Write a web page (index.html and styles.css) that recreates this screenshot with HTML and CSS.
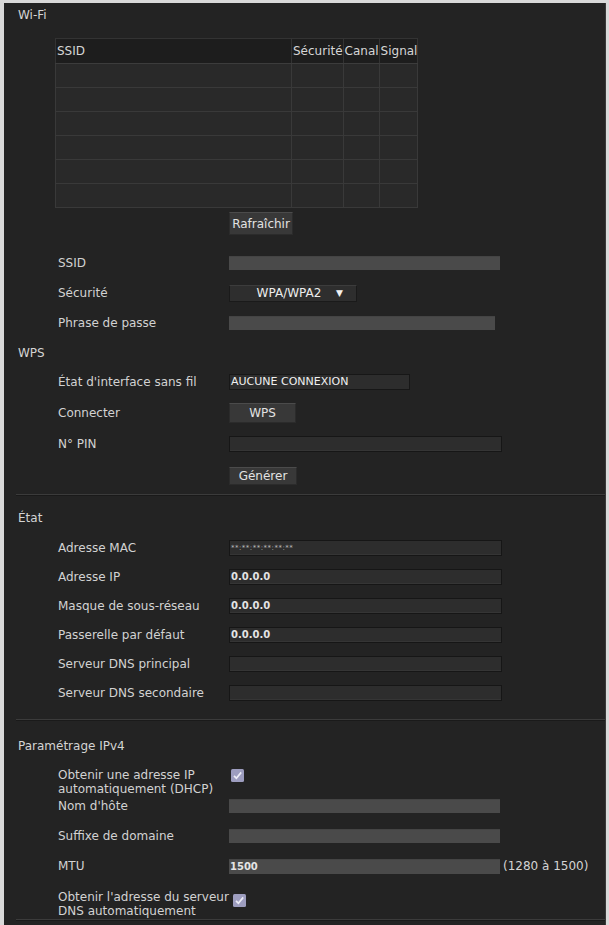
FILE: index.html
```html
<!DOCTYPE html>
<html lang="fr">
<head>
<meta charset="utf-8">
<title>Wi-Fi</title>
<link rel="stylesheet" href="styles.css">
</head>
<body>
<div class="panel">
  <section class="section sec-wifi">
    <h2 class="title">Wi-Fi</h2>
    <table class="ap-table">
      <thead>
        <tr><th class="c-ssid">SSID</th><th class="c-sec">Sécurité</th><th class="c-can">Canal</th><th class="c-sig">Signal</th></tr>
      </thead>
      <tbody>
        <tr><td></td><td></td><td></td><td></td></tr>
        <tr><td></td><td></td><td></td><td></td></tr>
        <tr><td></td><td></td><td></td><td></td></tr>
        <tr><td></td><td></td><td></td><td></td></tr>
        <tr><td></td><td></td><td></td><td></td></tr>
        <tr><td></td><td></td><td></td><td></td></tr>
      </tbody>
    </table>
    <div class="btn btn-refresh">Rafraîchir</div>

    <div class="rows rows-wifi">
      <div class="row"><span class="label">SSID</span><span class="inp-light w271"></span></div>
      <div class="row"><span class="label">Sécurité</span>
        <span class="select"><span class="select-val">WPA/WPA2</span><span class="select-arrow">▼</span></span>
      </div>
      <div class="row"><span class="label">Phrase de passe</span><span class="inp-light w266"></span></div>
    </div>

    <h2 class="title t-wps">WPS</h2>
    <div class="rows rows-wps">
      <div class="row"><span class="label">État d'interface sans fil</span><span class="status">AUCUNE CONNEXION</span></div>
      <div class="row"><span class="label">Connecter</span><span class="btn btn-wps">WPS</span></div>
      <div class="row"><span class="label">N° PIN</span><span class="inp-dark"></span></div>
      <div class="row"><span class="label"></span><span class="btn btn-gen">Générer</span></div>
    </div>
  </section>
  <div class="sep sep-1"></div>

  <section class="section sec-etat">
    <h2 class="title">État</h2>
    <div class="rows rows-etat">
      <div class="row"><span class="label">Adresse MAC</span><span class="inp-dark"><span class="val val-mac">**:**:**:**:**:**</span></span></div>
      <div class="row"><span class="label">Adresse IP</span><span class="inp-dark"><span class="val">0.0.0.0</span></span></div>
      <div class="row"><span class="label">Masque de sous-réseau</span><span class="inp-dark"><span class="val">0.0.0.0</span></span></div>
      <div class="row"><span class="label">Passerelle par défaut</span><span class="inp-dark"><span class="val">0.0.0.0</span></span></div>
      <div class="row"><span class="label">Serveur DNS principal</span><span class="inp-dark"></span></div>
      <div class="row"><span class="label">Serveur DNS secondaire</span><span class="inp-dark"></span></div>
    </div>
  </section>
  <div class="sep sep-2"></div>

  <section class="section sec-ipv4">
    <h2 class="title">Paramétrage IPv4</h2>
    <div class="rows rows-ipv4">
      <div class="row row-two row-dhcp"><span class="label">Obtenir une adresse IP<br>automatiquement (DHCP)</span>
        <svg class="cbox cb-dhcp" width="13" height="13" viewBox="0 0 13 13"><rect x="0" y="0" width="13" height="13" rx="1.5" fill="#9d9dbf"/><path d="M3 6.8 L5.4 9.2 L10.2 3.4" fill="none" stroke="#ececf6" stroke-width="1.7"/></svg>
      </div>
      <div class="row row-s row-nom"><span class="label">Nom d'hôte</span><span class="inp-light w271"></span></div>
      <div class="row row-s"><span class="label">Suffixe de domaine</span><span class="inp-light w271"></span></div>
      <div class="row row-s"><span class="label">MTU</span><span class="inp-light w271 inp-mtu"><span class="val">1500</span></span><span class="hint">(1280 à 1500)</span></div>
      <div class="row row-two row-dns"><span class="label">Obtenir l'adresse du serveur<br>DNS automatiquement</span>
        <svg class="cbox cb-dns" width="13" height="13" viewBox="0 0 13 13"><rect x="0" y="0" width="13" height="13" rx="1.5" fill="#9d9dbf"/><path d="M3 6.8 L5.4 9.2 L10.2 3.4" fill="none" stroke="#ececf6" stroke-width="1.7"/></svg>
      </div>
    </div>
  </section>
  <div class="sep sep-3"></div>
</div>
</body>
</html>
```

FILE: styles.css
```css
html, body {
  margin: 0;
  padding: 0;
}
body {
  background: #d9d9d9;
  font-family: "DejaVu Sans", Verdana, sans-serif;
  font-size: 12px;
  color: #d0d0d0;
}
.panel {
  margin: 3px 3px 0 4px;
  height: 922px;
  background: #232323;
  overflow: hidden;
  border-right: 1px solid #3a3a3a;
}
.section {
  padding-left: 14px;
}
.sec-wifi { padding-top: 5px; }
.title {
  margin: 0;
  height: 14px;
  line-height: 14px;
  font-size: 12px;
  font-weight: normal;
  color: #d4d4d4;
}
.t-wps { margin-top: 8px; }

/* table */
.ap-table {
  margin: 16px 0 0 37px;
  border-collapse: collapse;
  border: 1px solid #3c3c3c;
  table-layout: fixed;
}
.ap-table th {
  height: 24px;
  padding: 0 0 0 1px;
  background: #1d1d1d;
  font-weight: normal;
  text-align: left;
  color: #d6d6d6;
  font-size: 12px;
  white-space: nowrap;
  overflow: visible;
  border: 1px solid #333;
  border-bottom: 1px solid #3c3c3c;
}
.ap-table td {
  height: 23px;
  padding: 0;
  background: #292929;
  border: 1px solid #393939;
}
.c-ssid { width: 234px; }
.c-sec { width: 49px; }
.c-can { width: 34px; }
.c-sig { width: 36px; }

/* buttons */
.btn {
  display: flex;
  align-items: center;
  justify-content: center;
  box-sizing: border-box;
  background: #383838;
  border: 1px solid #2b2b2b;
  border-top-color: #4b4b4b;
  color: #e2e2e2;
  font-size: 12px;
}
.btn-refresh {
  margin: 4px 0 0 211px;
  width: 64px;
  height: 23px;
}
.btn-wps { width: 67px; height: 20px; }
.btn-gen { width: 68px; height: 18px; margin-top: 3px; }

/* rows */
.rows { margin-left: 40px; }
.rows-wifi { margin-top: 13px; }
.rows-wps { margin-top: 6px; }
.rows-etat { margin-top: 8px; }
.rows-ipv4 { margin-top: 15px; }
.row {
  display: flex;
  align-items: center;
  height: 30px;
}
.rows-wps .row { height: 31px; }
.rows-etat .row { height: 29px; }
.label {
  flex: 0 0 171px;
  width: 171px;
  white-space: nowrap;
  color: #d2d2d2;
}
.row-two {
  align-items: flex-start;
  height: 28px;
  line-height: 14px;
}
.row-s { height: 20px; margin-top: 10px; }
.row-nom { margin-top: 0; }
.row-dns { margin-top: 14px; }
.cbox { display: block; flex: 0 0 13px; }
.cb-dhcp { margin: 1px 0 0 2px; }
.cb-dns { margin: 4px 0 0 4px; }

/* inputs */
.inp-light {
  display: flex;
  align-items: center;
  height: 14px;
  background: #4a4a4a;
  box-shadow: inset 0 1px 0 #444;
}
.w271 { width: 271px; }
.w266 { width: 266px; }
.inp-mtu { height: 15px; }
.inp-dark {
  display: flex;
  align-items: center;
  box-sizing: border-box;
  width: 273px;
  height: 16px;
  background: #2d2d2d;
  border: 1px solid #161616;
  box-shadow: inset 0 -1px 0 #353535;
}
.val {
  padding-left: 1px;
  font-size: 10px;
  color: #e4e4e4;
  font-weight: bold;
  letter-spacing: 0;
}
.val-mac {
  font-size: 7px;
  font-weight: normal;
  color: #bdbdbd;
  letter-spacing: 0.5px;
}
.hint {
  margin-left: 3px;
  color: #d4d4d4;
}
.status {
  display: flex;
  align-items: center;
  box-sizing: border-box;
  width: 181px;
  height: 16px;
  padding-left: 1px;
  background: #2d2d2d;
  border: 1px solid #171717;
  color: #f0f0f0;
  font-size: 11px;
  white-space: nowrap;
}
.select {
  display: flex;
  align-items: center;
  box-sizing: border-box;
  width: 128px;
  height: 17px;
  background: #2e2e2e;
  border: 1px solid #1a1a1a;
  border-top-color: #3c3c3c;
}
.select-val {
  flex: 1;
  text-align: center;
  padding-left: 12px;
  color: #ececec;
  font-size: 12px;
}
.select-arrow {
  width: 20px;
  font-size: 9px;
  color: #f2f2f2;
  text-align: left;
}

/* separators */
.sep {
  height: 1px;
  margin-left: 12px;
  background: #3b3b3b;
  border-bottom: 1px solid #1a1a1a;
}
.sep-1 { margin-top: 4px; }
.sep-2 { margin-top: 12px; }
.sep-3 { margin-top: 1px; }
.sec-etat { padding-top: 15px; }
.sec-ipv4 { padding-top: 18px; }
```
